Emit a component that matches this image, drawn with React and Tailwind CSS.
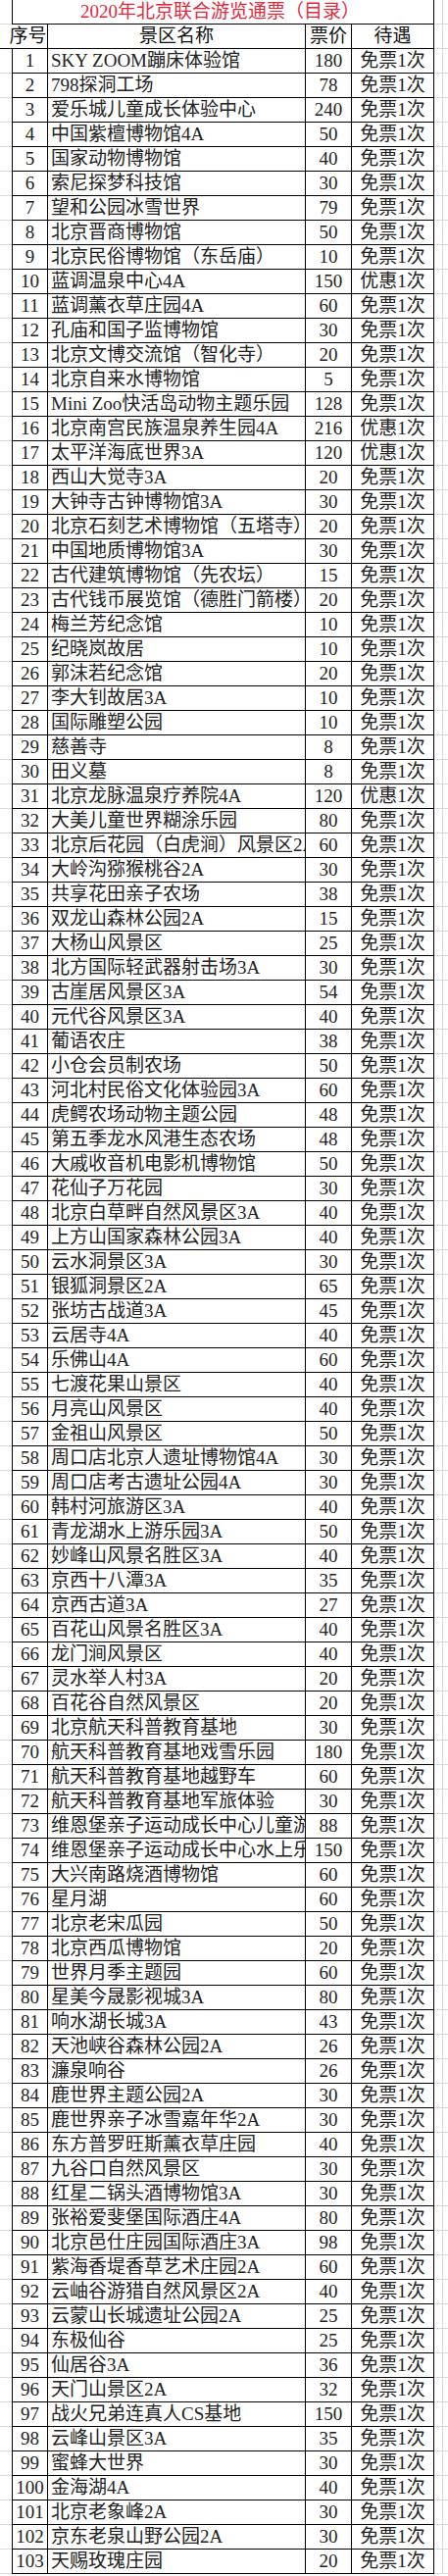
const rows = [
  ["SKY ZOOM蹦床体验馆", 180],
  ["798探洞工场", 78],
  ["爱乐城儿童成长体验中心", 240],
  ["中国紫檀博物馆4A", 50],
  ["国家动物博物馆", 40],
  ["索尼探梦科技馆", 30],
  ["望和公园冰雪世界", 79],
  ["北京晋商博物馆", 50],
  ["北京民俗博物馆（东岳庙）", 10],
  ["蓝调温泉中心4A", 150, "优惠1次"],
  ["蓝调薰衣草庄园4A", 60],
  ["孔庙和国子监博物馆", 30],
  ["北京文博交流馆（智化寺）", 20],
  ["北京自来水博物馆", 5],
  ["Mini Zoo快活岛动物主题乐园", 128],
  ["北京南宫民族温泉养生园4A", 216, "优惠1次"],
  ["太平洋海底世界3A", 120, "优惠1次"],
  ["西山大觉寺3A", 20],
  ["大钟寺古钟博物馆3A", 30],
  ["北京石刻艺术博物馆（五塔寺）", 20],
  ["中国地质博物馆3A", 30],
  ["古代建筑博物馆（先农坛）", 15],
  ["古代钱币展览馆（德胜门箭楼）", 20],
  ["梅兰芳纪念馆", 10],
  ["纪晓岚故居", 10],
  ["郭沫若纪念馆", 20],
  ["李大钊故居3A", 10],
  ["国际雕塑公园", 10],
  ["慈善寺", 8],
  ["田义墓", 8],
  ["北京龙脉温泉疗养院4A", 120, "优惠1次"],
  ["大美儿童世界糊涂乐园", 80],
  ["北京后花园（白虎涧）风景区2A", 60],
  ["大岭沟猕猴桃谷2A", 30],
  ["共享花田亲子农场", 38],
  ["双龙山森林公园2A", 15],
  ["大杨山风景区", 25],
  ["北方国际轻武器射击场3A", 30],
  ["古崖居风景区3A", 54],
  ["元代谷风景区3A", 40],
  ["葡语农庄", 38],
  ["小仓会员制农场", 50],
  ["河北村民俗文化体验园3A", 60],
  ["虎鳄农场动物主题公园", 48],
  ["第五季龙水风港生态农场", 48],
  ["大戚收音机电影机博物馆", 50],
  ["花仙子万花园", 30],
  ["北京白草畔自然风景区3A", 40],
  ["上方山国家森林公园3A", 40],
  ["云水洞景区3A", 30],
  ["银狐洞景区2A", 65],
  ["张坊古战道3A", 45],
  ["云居寺4A", 40],
  ["乐佛山4A", 60],
  ["七渡花果山景区", 40],
  ["月亮山风景区", 40],
  ["金祖山风景区", 50],
  ["周口店北京人遗址博物馆4A", 30],
  ["周口店考古遗址公园4A", 30],
  ["韩村河旅游区3A", 40],
  ["青龙湖水上游乐园3A", 50],
  ["妙峰山风景名胜区3A", 40],
  ["京西十八潭3A", 35],
  ["京西古道3A", 27],
  ["百花山风景名胜区3A", 40],
  ["龙门涧风景区", 40],
  ["灵水举人村3A", 20],
  ["百花谷自然风景区", 20],
  ["北京航天科普教育基地", 30],
  ["航天科普教育基地戏雪乐园", 180],
  ["航天科普教育基地越野车", 60],
  ["航天科普教育基地军旅体验", 30],
  ["维恩堡亲子运动成长中心儿童游乐园", 88],
  ["维恩堡亲子运动成长中心水上乐园", 150],
  ["大兴南路烧酒博物馆", 60],
  ["星月湖", 60],
  ["北京老宋瓜园", 50],
  ["北京西瓜博物馆", 20],
  ["世界月季主题园", 60],
  ["星美今晟影视城3A", 80],
  ["响水湖长城3A", 43],
  ["天池峡谷森林公园2A", 26],
  ["濂泉响谷", 26],
  ["鹿世界主题公园2A", 30],
  ["鹿世界亲子冰雪嘉年华2A", 30],
  ["东方普罗旺斯薰衣草庄园", 40],
  ["九谷口自然风景区", 30],
  ["红星二锅头酒博物馆3A", 30],
  ["张裕爱斐堡国际酒庄4A", 80],
  ["北京邑仕庄园国际酒庄3A", 98],
  ["紫海香堤香草艺术庄园2A", 60],
  ["云岫谷游猎自然风景区2A", 40],
  ["云蒙山长城遗址公园2A", 25],
  ["东极仙谷", 25],
  ["仙居谷3A", 36],
  ["天门山景区2A", 32],
  ["战火兄弟连真人CS基地", 150],
  ["云峰山景区3A", 35],
  ["蜜蜂大世界", 30],
  ["金海湖4A", 40],
  ["北京老象峰2A", 30],
  ["京东老泉山野公园2A", 30],
  ["天赐玫瑰庄园", 20],
];

function Margins({ children }) {
  return (
    <div className="flex h-[25px]">
      <div className="w-[12px] shrink-0 border-b border-[#d9d9d9]" />
      {children}
      <div className="flex-1 border-b border-[#d9d9d9]">
        <div className="w-[9px] h-full border-r border-[#d9d9d9]" />
      </div>
    </div>
  );
}

const cell = "shrink-0 border-b border-r border-black flex items-center whitespace-nowrap overflow-hidden";

export default function App() {
  return (
    <div className="bg-white text-[#222] text-[19px] leading-[24px] font-['Liberation_Serif','Noto_Sans_CJK_SC',serif] w-[457px]">
      <Margins>
        <div className="w-[431px] shrink-0 border-x border-b border-black flex items-center justify-center text-[#e02a3c] pr-[6px]">
          2020年北京联合游览通票（目录）
        </div>
      </Margins>

      <div className="flex h-[25px] text-[#111]">
        <div className={`w-[49px] justify-center pl-[9px] ${cell}`}>序号</div>
        <div className={`w-[263px] justify-center ${cell}`}>景区名称</div>
        <div className={`w-[47px] justify-center ${cell}`}>票价</div>
        <div className={`w-[84px] justify-center ${cell}`}>待遇</div>
        <div className="flex-1 border-b border-[#d9d9d9]">
          <div className="w-[9px] h-full border-r border-[#d9d9d9]" />
        </div>
      </div>

      {rows.map(([name, price, perk], i) => (
        <Margins key={i}>
          <div className={`w-[37px] border-l justify-center ${cell}`}>{i + 1}</div>
          <div className={`w-[263px] pl-[3px] ${cell}`}>{name}</div>
          <div className={`w-[47px] justify-center ${cell}`}>{price}</div>
          <div className={`w-[84px] justify-center ${cell}`}>{perk || "免票1次"}</div>
        </Margins>
      ))}
    </div>
  );
}
